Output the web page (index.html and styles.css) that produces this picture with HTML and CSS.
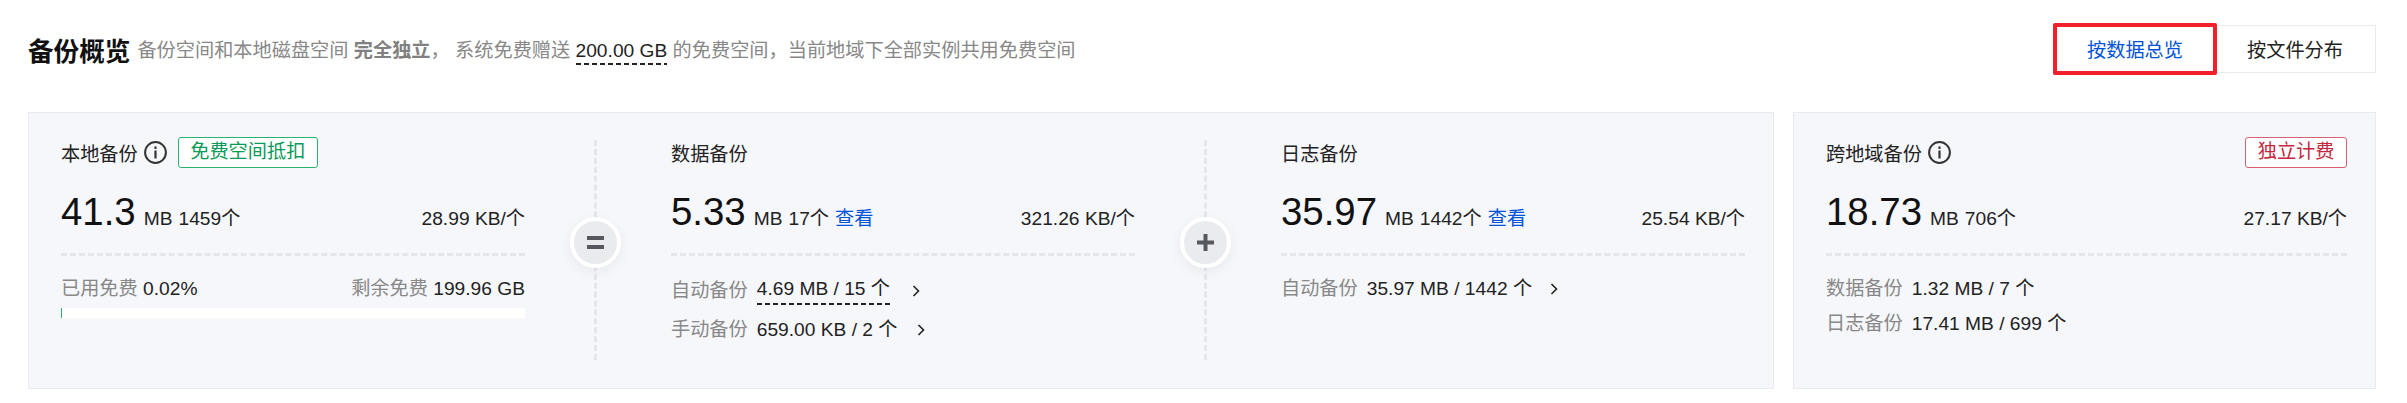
FILE: index.html
```html
<!DOCTYPE html>
<html lang="zh-CN">
<head>
<meta charset="utf-8">
<title>备份概览</title>
<link rel="stylesheet" href="styles.css">
</head>
<body>
<div class="page">
  <header class="header">
    <div class="intro">
      <h1 class="title">备份概览</h1>
      <p class="desc">备份空间和本地磁盘空间 <b class="desc-strong">完全独立</b>， 系统免费赠送 <span class="dashed">200.00 GB</span> 的免费空间，当前地域下全部实例共用免费空间</p>
    </div>
    <div class="switch">
      <button class="switch-btn active">按数据总览</button>
      <button class="switch-btn">按文件分布</button>
    </div>
  </header>
  <main class="cards">
    <section class="card card-main">
      <div class="col">
        <div class="head">
          <span class="label">本地备份</span>
          <svg class="info" viewBox="0 0 23 23"><circle cx="11.5" cy="11.5" r="10.4" fill="none" stroke="#333" stroke-width="2"/><rect x="10.4" y="5.5" width="2.2" height="2.4" fill="#333"/><rect x="10.4" y="9.5" width="2.2" height="8" fill="#333"/></svg>
          <span class="tag tag-green">免费空间抵扣</span>
        </div>
        <div class="value-row">
          <div><span class="num">41.3</span><span class="unit">MB</span><span class="unit">1459个</span></div>
          <span class="avg">28.99 KB/个</span>
        </div>
        <div class="rule"></div>
        <div class="split"><span><span class="muted">已用免费</span> <span>0.02%</span></span><span><span class="muted">剩余免费</span> <span>199.96 GB</span></span></div>
        <div class="bar"><div class="bar-fill" style="width:1px"></div></div>
      </div>
      <div class="sep">
        <div class="sep-line"></div>
        <div class="op"><svg viewBox="0 0 17 17" class="op-icon"><rect x="0" y="2" width="17" height="4" fill="#55585e"/><rect x="0" y="11" width="17" height="4" fill="#55585e"/></svg></div>
      </div>
      <div class="col">
        <div class="head"><span class="label">数据备份</span></div>
        <div class="value-row">
          <div><span class="num">5.33</span><span class="unit">MB</span><span class="unit">17个</span><a class="link">查看</a></div>
          <span class="avg">321.26 KB/个</span>
        </div>
        <div class="rule"></div>
        <div class="line first"><span class="muted">自动备份</span><span class="dashed">4.69 MB / 15 个</span><svg class="chev chev-a" viewBox="0 0 8 12"><path d="M1.5 1l5 5-5 5" fill="none" stroke="#222" stroke-width="1.6"/></svg></div>
        <div class="line second"><span class="muted">手动备份</span><span>659.00 KB / 2 个</span><svg class="chev chev-b" viewBox="0 0 8 12"><path d="M1.5 1l5 5-5 5" fill="none" stroke="#222" stroke-width="1.6"/></svg></div>
      </div>
      <div class="sep">
        <div class="sep-line"></div>
        <div class="op"><svg viewBox="0 0 17 17" class="op-icon"><rect x="0" y="6.5" width="17" height="4" fill="#55585e"/><rect x="6.5" y="0" width="4" height="17" fill="#55585e"/></svg></div>
      </div>
      <div class="col">
        <div class="head"><span class="label">日志备份</span></div>
        <div class="value-row">
          <div><span class="num">35.97</span><span class="unit">MB</span><span class="unit">1442个</span><a class="link">查看</a></div>
          <span class="avg">25.54 KB/个</span>
        </div>
        <div class="rule"></div>
        <div class="line first"><span class="muted">自动备份</span><span>35.97 MB / 1442 个</span><svg class="chev chev-c" viewBox="0 0 8 12"><path d="M1.5 1l5 5-5 5" fill="none" stroke="#222" stroke-width="1.6"/></svg></div>
      </div>
    </section>
    <section class="card card-side">
      <div class="col">
        <div class="head">
          <span class="label">跨地域备份</span>
          <svg class="info" viewBox="0 0 23 23"><circle cx="11.5" cy="11.5" r="10.4" fill="none" stroke="#333" stroke-width="2"/><rect x="10.4" y="5.5" width="2.2" height="2.4" fill="#333"/><rect x="10.4" y="9.5" width="2.2" height="8" fill="#333"/></svg>
          <span class="tag tag-red">独立计费</span>
        </div>
        <div class="value-row">
          <div><span class="num">18.73</span><span class="unit">MB</span><span class="unit">706个</span></div>
          <span class="avg">27.17 KB/个</span>
        </div>
        <div class="rule"></div>
        <div class="line first"><span class="muted">数据备份</span><span>1.32 MB / 7 个</span></div>
        <div class="line third"><span class="muted">日志备份</span><span>17.41 MB / 699 个</span></div>
      </div>
    </section>
  </main>
</div>
</body>
</html>
```
FILE: styles.css
```css
* { box-sizing: border-box; }
html, body { margin: 0; background: #fff; }
body {
  font-family: "Liberation Sans", "Noto Sans CJK SC", sans-serif;
  font-size: 19.2px;
  color: #222;
}
.page { padding: 23px 31px 0 28px; }

.header { display: flex; justify-content: space-between; align-items: center; height: 52px; }
.intro { display: flex; align-items: center; gap: 7px; }
.title { margin: 0; font-size: 25.6px; font-weight: 700; color: #111; }
.desc { margin: 0; font-size: 19.2px; color: #888; }
.desc-strong { color: #808080; font-weight: 700; }
.dashed {
  color: #222;
  padding-bottom: 4px;
  background: linear-gradient(to right, #222 5px, transparent 5px) left bottom / 8px 2px repeat-x;
}

.switch { display: flex; align-items: center; }
.switch-btn {
  font: inherit;
  width: 159px;
  height: 48px;
  background: #fff;
  color: #222;
  border: 1.5px solid #e7eaef;
  border-left: 0;
  padding: 0 2px 0 0;
}
.switch-btn.active {
  width: 164px;
  height: 52px;
  color: #0052d9;
  border: 4px solid #f2202b;
  border-radius: 2px;
  padding: 0;
}

.cards { display: flex; gap: 19px; margin-top: 37px; height: 277px; }
.card {
  background: #f6f7fb;
  border: 1.5px solid #e9ebf0;
  padding: 24px 28px 0 32px;
  display: flex;
}
.card-main { width: 1746px; }
.card-side { width: 583px; }
.col { flex: 1 1 0; min-width: 0; display: flex; flex-direction: column; }

.head { display: flex; align-items: center; height: 31px; }
.label { color: #222; }
.info { width: 23px; height: 23px; margin-left: 6px; }
.tag {
  height: 31px;
  line-height: 27px;
  padding: 0 11.5px;
  border: 1.5px solid;
  border-radius: 3px;
  background: #fff;
}
.tag-green { margin-left: 11px; border-color: #29b36f; color: #0a9a5a; }
.tag-red { margin-left: auto; border-color: #d9616f; color: #c4283f; }

.value-row {
  display: flex;
  justify-content: space-between;
  align-items: baseline;
  margin-top: 20px;
  height: 48px;
  line-height: 48px;
}
.num { font-size: 38.4px; color: #111; margin-right: 8px; }
.unit { margin-right: 6px; }
.link { color: #0052d9; }
.avg { color: #222; }

.rule { border-top: 3px dashed #e3e6eb; margin-top: 17px; }
.muted { color: #888; }
.split { display: flex; justify-content: space-between; margin-top: 21px; line-height: 24px; }
.bar { height: 10px; background: #fff; margin-top: 7px; }
.bar-fill { height: 100%; background: #29b36f; }

.line { display: flex; align-items: center; gap: 9px; line-height: 24px; }
.first { margin-top: 21px; }
.second { margin-top: 13px; }
.third { margin-top: 11px; }
.chev { width: 8px; height: 12px; }
.chev-a { margin-left: 13px; }
.chev-b { margin-left: 10px; }
.chev-c { margin-left: 9px; }

.sep { flex: 0 0 146px; position: relative; display: flex; justify-content: flex-start; padding: 3px 0 28px 69px; }
.sep-line { border-left: 3px dashed #e3e6eb; }
.op {
  position: absolute;
  left: 45px;
  top: 80px;
  width: 51px;
  height: 51px;
  border-radius: 50%;
  background: #e9ebef;
  border: 4px solid #fff;
  box-shadow: 0 4px 14px rgba(0, 0, 0, 0.06);
  display: flex;
  align-items: center;
  justify-content: center;
}
.op-icon { width: 17px; height: 17px; }
```
